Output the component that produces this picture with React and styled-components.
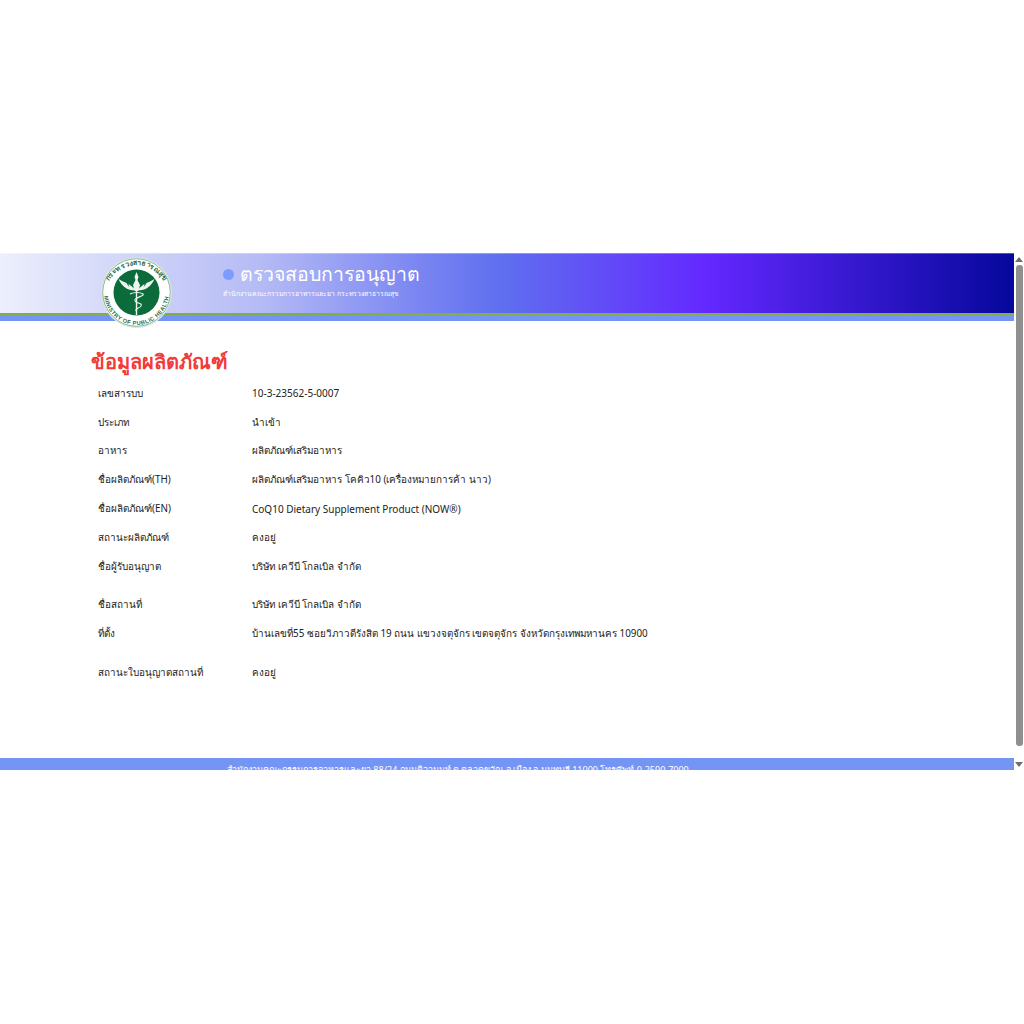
import React from 'react';
import styled, { createGlobalStyle } from 'styled-components';

const GlobalStyle = createGlobalStyle`
  html, body {
    margin: 0;
    padding: 0;
    background: #fff;
  }
  body {
    font-family: 'Noto Sans', 'Open Sans', 'DejaVu Sans', sans-serif;
  }
`;

const Page = styled.div`
  height: 1024px;
  padding-top: 253px;
  box-sizing: border-box;
`;

const Frame = styled.div`
  display: flex;
  height: 517px;
  overflow: hidden;
`;

const Content = styled.main`
  flex: 1;
  min-width: 0;
  display: flex;
  flex-direction: column;
`;

const Banner = styled.header`
  height: 60px;
  flex: none;
  display: flex;
  position: relative;
  background: linear-gradient(90deg, #eceffc 0%, #b4baf5 26%, #7a85f2 41.4%, #5f70ef 49.3%, #6428ff 69.7%, #05089c 100%);
  box-shadow: inset 0 1px 0 rgba(255, 255, 255, 0.3);
`;

const Rule = styled.div`
  height: 8px;
  flex: none;
  box-sizing: border-box;
  border-top: 2px solid #84ad45;
  background: #7595f5;
`;

const Seal = styled.svg`
  position: absolute;
  left: 101px;
  top: 4px;
  width: 71px;
  height: 71px;
`;

const BannerText = styled.div`
  margin-left: 223px;
  padding-top: 7px;
  color: #fff;
`;

const BannerTitle = styled.div`
  display: flex;
  align-items: center;
  gap: 6px;
  height: 28px;
  font-size: 19.5px;
  font-weight: 500;
  white-space: nowrap;

  &::before {
    content: '';
    width: 11px;
    height: 11px;
    border-radius: 50%;
    background: #7b9cff;
  }
`;

const BannerSub = styled.div`
  font-size: 6.75px;
  line-height: 12px;
  white-space: nowrap;
`;

const Body = styled.section`
  flex: 1;
  padding: 26px 0 0 91px;
`;

const Heading = styled.h1`
  margin: 0 0 2px;
  font-size: 20px;
  line-height: 30px;
  font-weight: 700;
  color: #f33a3a;
`;

const Rows = styled.dl`
  margin: 0;
  padding-left: 7px;
`;

const Row = styled.div`
  display: flex;
  align-items: center;
  height: 28.8px;
  margin-bottom: ${({ $gap }) => $gap || 0}px;
  font-size: 9.87px;
  color: #222;
`;

const Label = styled.dt`
  width: 154px;
  flex: none;
`;

const Value = styled.dd`
  margin: 0;
  font-size: ${({ $latin }) => ($latin ? '10px' : 'inherit')};
`;

const Footer = styled.footer`
  height: 12px;
  flex: none;
  background: #7595f5;
  overflow: hidden;
  color: #fff;
  font-size: 9px;
  line-height: 24px;
  padding-left: 227px;
  white-space: nowrap;
`;

const ScrollBar = styled.div`
  width: 10px;
  flex: none;
  display: flex;
  flex-direction: column;
  align-items: center;
  background: #fff;
`;

const Arrow = styled.div`
  height: 12px;
  flex: none;
  display: flex;
  align-items: center;
  color: #6d6d6d;
  margin-top: ${({ $down }) => ($down ? 'auto' : '0')};

  &::before {
    content: '';
    border-left: 4px solid transparent;
    border-right: 4px solid transparent;
    ${({ $down }) => ($down ? 'border-top: 5px solid currentColor;' : 'border-bottom: 5px solid currentColor;')}
  }
`;

const Thumb = styled.div`
  width: 7px;
  height: 481px;
  border-radius: 3px;
  background: #8f8f8f;
`;

const rows = [
  { label: 'เลขสารบบ', value: '10-3-23562-5-0007', latin: true },
  { label: 'ประเภท', value: 'นำเข้า' },
  { label: 'อาหาร', value: 'ผลิตภัณฑ์เสริมอาหาร' },
  { label: 'ชื่อผลิตภัณฑ์(TH)', value: 'ผลิตภัณฑ์เสริมอาหาร โคคิว10 (เครื่องหมายการค้า นาว)' },
  { label: 'ชื่อผลิตภัณฑ์(EN)', value: 'CoQ10 Dietary Supplement Product (NOW®)', latin: true },
  { label: 'สถานะผลิตภัณฑ์', value: 'คงอยู่' },
  { label: 'ชื่อผู้รับอนุญาต', value: 'บริษัท เควีบี โกลเบิล จำกัด', gap: 10 },
  { label: 'ชื่อสถานที่', value: 'บริษัท เควีบี โกลเบิล จำกัด' },
  { label: 'ที่ตั้ง', value: 'บ้านเลขที่55 ซอยวิภาวดีรังสิต 19 ถนน แขวงจตุจักร เขตจตุจักร จังหวัดกรุงเทพมหานคร 10900', gap: 10 },
  { label: 'สถานะใบอนุญาตสถานที่', value: 'คงอยู่' },
];

const MophSeal = () => (
  <Seal viewBox="0 0 71 71">
    <defs>
      <path id="sealTop" d="M4.5 39a31 31 0 0 1 62 0" />
      <path id="sealBottom" d="M3 35.5a32.5 32.5 0 0 0 65 0" />
    </defs>
    <circle cx="35.5" cy="35.5" r="35" fill="#fff" stroke="#d5e3da" />
    <circle cx="35.5" cy="35.5" r="33.8" fill="none" stroke="#2f8257" strokeWidth="0.6" />
    <circle cx="35.5" cy="35.5" r="23" fill="#0b6b3a" />
    <text fontSize="7" fontWeight="700" fill="#2a6b46" letterSpacing="0.25" fontFamily="'Noto Sans', sans-serif">
      <textPath href="#sealTop" startOffset="50%" textAnchor="middle">กระทรวงสาธารณสุข</textPath>
    </text>
    <text fontSize="5.6" fontWeight="700" fill="#2a6b46" letterSpacing="0.5" fontFamily="'Liberation Sans', sans-serif">
      <textPath href="#sealBottom" startOffset="50%" textAnchor="middle">MINISTRY OF PUBLIC HEALTH</textPath>
    </text>
    <path d="M33.5 33c-5 1-12-2-16-11 3 2 6 3 8 4 1 2 2 3 3 4-1-2-1-3-1-3 2 1 4 3 6 5zM37.500 33c5 1 12-2 16-11-3 2-6 3-8 4-1 2-2 3-3 4 1-2 1-3 1-3-2 1-4 3-6 5z" fill="#eef5ef" />
    <path d="M35.5 15l2 5-1 3 2.5 5-1.500 6h-4l-1.500-6 2.500-5-1-3z" fill="#eef5ef" />
    <path d="M35.5 34v24" stroke="#eef5ef" strokeWidth="1.4" />
    <path d="M29 37c4-2 10-2 13 0 2 2-10 4-8 7s8 2 6 5-6 2-5 5" fill="none" stroke="#eef5ef" strokeWidth="1.1" />
  </Seal>
);

const App = () => (
  <Page>
    <GlobalStyle />
    <Frame>
      <Content>
        <Banner>
          <MophSeal />
          <BannerText>
            <BannerTitle>ตรวจสอบการอนุญาต</BannerTitle>
            <BannerSub>สำนักงานคณะกรรมการอาหารและยา กระทรวงสาธารณสุข</BannerSub>
          </BannerText>
        </Banner>
        <Rule />
        <Body>
          <Heading>ข้อมูลผลิตภัณฑ์</Heading>
          <Rows>
            {rows.map((row) => (
              <Row key={row.label} $gap={row.gap}>
                <Label>{row.label}</Label>
                <Value $latin={row.latin}>{row.value}</Value>
              </Row>
            ))}
          </Rows>
        </Body>
        <Footer>สำนักงานคณะกรรมการอาหารและยา 88/24 ถนนติวานนท์ ต.ตลาดขวัญ อ.เมือง จ.นนทบุรี 11000 โทรศัพท์ 0-2590-7000</Footer>
      </Content>
      <ScrollBar>
        <Arrow />
        <Thumb />
        <Arrow $down />
      </ScrollBar>
    </Frame>
  </Page>
);

export default App;
